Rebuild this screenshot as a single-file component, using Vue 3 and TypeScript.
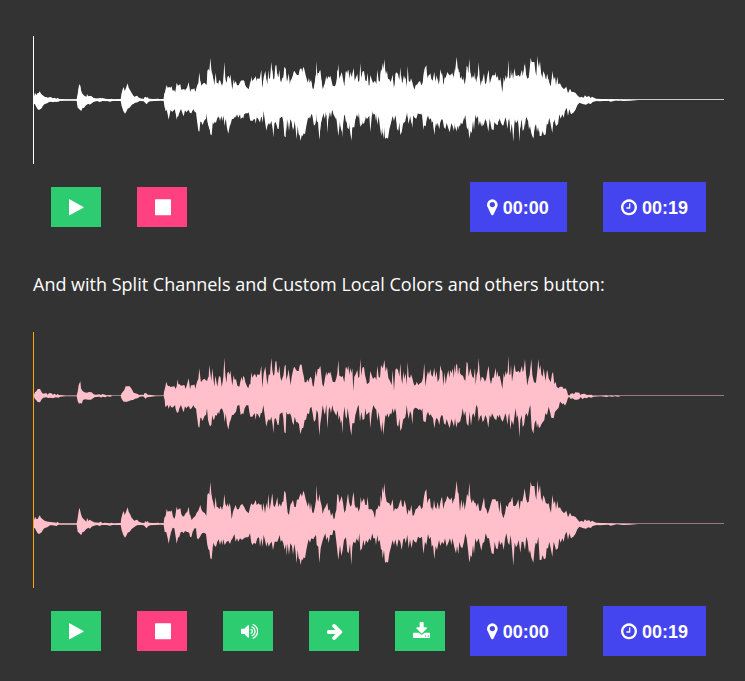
<script setup lang="ts">
interface Segment {
  at: number
  mid: number
  top: string
  bottom: string
}

interface Glyph {
  x: number
  width: number
  d: string
}

// Envelope coordinates use three units per CSS pixel.
const WIDTH = 2073
const HALF = 192
const ICON = 18.67

const left: Segment[] = [
  {
    at: -24,
    mid: 153,
    top: '26,152 30,142 34,139 38,132 45,132 50,142 54,146 64,144 67,149 72,145 78,144 84,149 88,146 94,150 98,147 102,150 115,151 122,152 155,152 158,140 161,120 166,109 168,130 172,137 178,142 186,143 192,141 200,142 206,148 212,149 225,148 227,151 232,147 240,149 245,151 255,150 262,152 287,152 290,145 298,135 302,124 314,124 320,132 326,143 338,147 342,150 352,149 356,150 359,144 364,145 368,149 380,150 392,152 416,152 417,140 420,130 424,110 427,120 430,124 433,122 436,126 448,124 452,132 455,124 458,103 460,118 464,118 468,122 478,120 482,132 487,115 491,100 494,122',
    bottom: '26,154 30,162 34,166 38,171 45,172 50,163 55,158 64,157 70,159 78,158 84,160 92,157 100,158 106,155 120,154 155,154 158,168 162,176 166,174 170,176 174,165 180,163 190,164 198,164 204,160 210,156 225,155 228,158 232,155 242,157 246,154 255,155 262,153 287,153 290,162 296,170 306,170 318,166 326,164 330,161 338,160 344,155 354,154 362,161 366,157 372,156 390,154 416,153 419,165 421,186 424,184 428,180 431,192 435,180 438,185 442,188 447,184 450,180 452,192 456,203 460,202 463,190 468,180 472,192 476,202 480,184 484,190 490,183 493,186',
  },
  {
    at: 471,
    mid: 153,
    top: '0,132 3,121 7,121 10,120 13,118 16,131 19,118 22,108 25,102 28,70 31,98 33,112 36,107 40,103 44,102 48,106 51,109 54,98 56,95 58,60 61,85 64,108 67,70 70,98 73,125 76,92 79,108 82,125 86,98 89,92 92,98 95,126 98,110 100,95 103,38 106,88 109,114 112,84 116,80 119,90 121,76 124,100 127,122 131,91 134,105 138,102 142,122 148,125 151,110 155,95 157,108 160,92 163,97 166,112 172,126 175,130 178,118 181,118 184,82 187,98 190,92 195,86 199,98 202,88 208,90 210,85 214,62 217,130 221,85 226,65 229,92 232,120 236,90 240,88 244,38 247,75 250,92 253,88 256,50 259,48 262,80 265,85 268,62 271,95 274,108 277,100 280,92 284,62 287,60 289,105 293,90 296,73 299,100 302,120 305,95 308,82 311,68 314,66 317,73 321,78 326,78 329,62 332,58 335,60 338,80 341,92 344,112 349,112 352,102 355,112 359,100 362,95 365,102 368,122 371,125 375,95 377,76 380,96 383,72 387,72 391,62 394,90 397,118 401,125 405,100 409,80 411,92 415,82 418,86',
    bottom: '0,193 5,190 10,181 15,190 18,190 21,215 25,245 28,248 31,218 34,218 37,228 40,222 44,212 48,210 51,190 54,225 58,240 61,244 64,240 67,210 70,225 73,222 76,210 80,212 84,200 87,208 90,195 95,190 98,195 101,205 104,232 107,205 111,238 115,254 119,232 122,225 126,210 130,210 134,205 138,200 142,182 148,180 152,210 157,205 160,208 164,190 169,181 175,181 178,200 181,215 187,215 190,210 194,205 197,224 200,205 205,210 209,220 212,205 216,203 220,180 224,210 229,245 233,228 237,222 240,228 244,215 248,240 250,265 253,225 256,218 259,225 263,240 266,240 269,208 273,205 277,202 280,220 283,262 287,265 289,200 292,208 297,208 300,205 304,215 307,232 311,240 314,215 319,232 323,232 327,238 331,268 336,250 340,248 344,225 348,224 352,205 357,208 360,190 364,185 368,205 371,226 374,230 377,222 380,194 384,205 388,272 391,235 394,215 398,180 402,200 405,210 409,178 412,252 416,195 419,185',
  },
  {
    at: 861,
    mid: 153,
    top: '3,68 6,110 9,128 13,118 17,98 20,85 24,98 27,78 31,80 34,92 38,110 45,112 49,100 52,85 55,45 58,92 65,96 68,92 73,112 77,68 79,66 82,75 85,62 88,90 91,68 94,85 97,70 100,138 103,95 107,88 112,75 115,100 118,95 121,42 124,92 127,68 132,66 135,90 138,102 141,118 148,112 151,78 154,88 159,102 165,95 169,105 172,62 176,95 180,98 183,60 188,70 190,62 193,45 197,80 201,65 205,98 210,108 215,120 218,75 222,138 226,75 229,70 234,75 238,95 241,55 244,100 247,118 250,78 253,102 257,85 260,120 263,50 266,95 270,100 273,88 277,100 280,112 283,122 288,118 290,110 295,120 300,115 305,112 309,98 313,55 316,125 320,95 324,78 327,90 331,72 334,90 338,95 343,68 346,98 350,78 353,112 358,100 361,60 364,75 367,80 370,122 374,82 377,118 381,92 385,75 388,98 391,75 395,85 398,70 402,100 403,58 406,85 408,62 411,55 414,90 417,68 419,70',
    bottom: '0,250 4,190 7,182 10,200 13,185 16,195 19,175 23,250 27,185 30,190 33,205 37,180 40,195 45,205 49,212 53,195 56,225 59,210 62,235 65,225 67,265 70,215 73,185 77,215 80,222 83,190 87,220 90,245 94,272 97,235 103,235 106,210 109,200 113,185 116,180 120,230 124,200 128,225 133,222 136,190 139,210 144,205 148,200 151,250 155,205 158,190 160,180 164,188 169,195 172,228 176,200 180,235 184,262 187,228 190,270 193,240 196,210 199,215 202,205 206,218 210,205 214,208 218,190 221,205 225,190 228,200 231,240 235,245 238,220 241,258 245,250 249,225 252,220 255,220 258,205 260,180 263,205 266,222 270,198 274,208 277,238 280,195 285,188 291,190 296,195 300,192 304,198 307,190 310,228 317,232 320,210 324,200 328,212 332,208 336,215 339,220 343,250 347,225 350,218 354,225 358,240 361,218 365,210 368,212 372,235 376,240 380,222 384,235 389,250 394,222 398,232 402,245 405,220 409,248 413,230 417,235 419,228',
  },
  {
    at: 1251,
    mid: 153,
    top: '30,85 34,90 39,92 42,102 46,108 50,50 53,55 56,95 61,70 64,85 67,95 71,100 75,68 77,120 80,90 83,80 86,40 89,85 92,110 95,95 100,98 105,110 109,100 112,80 116,62 119,100 123,118 127,98 131,98 135,80 137,68 140,98 142,78 145,95 149,92 153,110 157,132 161,85 164,98 167,78 170,90 173,80 175,32 178,90 181,88 183,60 186,110 190,85 193,58 197,80 202,80 206,78 210,84 213,72 216,62 218,82 221,75 225,42 228,85 232,122 236,100 239,90 244,42 247,90 251,108 255,115 258,112 262,78 265,42 268,75 271,60 274,88 278,95 281,70 284,90 287,108 290,80 292,75 296,100 302,112 306,88 309,80 313,118 317,110 320,125 325,130 330,125 337,125 341,132 347,130 351,138 354,150 358,152 362,146 368,145 372,148 376,142 388,143 391,150 396,147 404,146 410,150 424,149 428,152 450,152 470,151 475,153 485,151 490,153 500,151 510,152 822,152',
    bottom: '30,232 35,210 38,190 42,212 46,198 50,235 55,244 59,200 63,242 67,210 71,205 74,218 78,185 80,180 83,190 86,230 90,215 94,210 98,232 102,225 106,210 110,220 115,248 119,210 123,218 126,205 131,215 134,222 139,225 142,210 146,218 149,208 153,222 158,230 162,220 166,205 169,215 172,240 176,210 178,205 181,254 185,225 190,240 194,210 197,190 200,220 203,210 206,235 208,278 211,225 215,210 218,246 222,240 226,210 230,205 233,215 238,190 241,180 245,250 250,266 254,235 258,225 261,248 264,235 267,250 271,245 274,238 278,232 283,225 286,205 291,210 296,185 300,200 304,218 311,220 315,200 320,195 326,188 330,170 338,178 341,175 345,182 350,172 354,158 358,156 362,162 368,160 374,164 382,164 388,162 392,156 397,162 404,158 410,160 416,156 424,158 430,155 452,154 465,155 470,156 478,154 485,155 495,154 505,155 512,153 822,153',
  },
]

const right: Segment[] = [
  {
    at: -24,
    mid: 537,
    top: '26,530 30,515 34,522 38,522 44,511 48,518 52,522 60,528 70,530 82,532 95,533 98,530 102,535 155,535 158,520 162,492 164,490 168,508 172,518 178,524 184,530 186,518 190,528 194,524 200,528 207,532 220,533 228,530 232,535 240,533 255,535 260,533 265,535 287,534 289,520 293,505 296,498 299,510 302,503 308,487 311,500 315,507 320,518 328,527 336,524 342,530 350,533 358,534 361,528 364,532 368,528 371,533 385,534 400,533 404,535 410,534 416,535 418,518 422,512 425,492 428,500 433,498 436,500 440,496 444,515 448,522 451,512 455,485 458,495 462,492 466,490 469,508 474,515 478,512 482,505 487,500 491,485 494,510',
    bottom: '26,548 30,550 34,558 38,565 42,567 50,562 53,556 58,550 68,546 75,541 82,541 95,543 100,539 120,539 155,539 158,560 162,563 165,567 169,570 172,562 177,560 183,553 190,548 195,551 200,545 207,542 216,540 224,543 230,540 245,540 255,542 262,540 287,540 290,555 295,570 300,578 304,572 308,563 314,560 320,552 328,546 336,541 346,540 356,541 362,547 365,550 369,544 375,541 390,540 410,539 416,540 419,560 424,562 428,580 431,596 435,575 438,562 443,548 448,550 452,575 455,596 459,578 463,575 467,562 472,560 476,565 480,558 485,560 490,562 493,564',
  },
  {
    at: 471,
    mid: 162,
    top: '0,133 5,150 10,143 16,138 20,128 25,122 31,105 34,118 38,125 45,130 49,138 52,75 55,68 58,75 61,36 64,70 67,88 70,98 73,118 77,80 80,110 84,112 88,118 92,108 96,120 100,105 103,72 106,102 110,110 113,100 116,112 119,98 122,115 125,148 129,125 133,115 137,105 141,118 146,118 152,105 157,102 163,112 168,122 176,130 180,112 184,100 188,105 192,102 197,90 200,105 206,100 210,105 214,102 217,125 221,98 225,130 229,98 232,115 235,72 239,120 243,95 247,70 250,105 254,112 258,100 262,82 265,112 269,100 273,110 277,95 280,95 283,62 287,68 290,100 293,128 297,135 301,105 305,98 309,90 313,110 317,112 321,88 325,90 329,78 332,70 336,80 340,62 343,70 347,88 350,98 353,110 357,95 360,120 363,100 367,128 371,128 375,110 378,90 379,45 382,88 385,95 388,72 391,92 395,108 398,132 402,118 406,112 412,98 415,122 419,118 423,138 427,128 431,148 434,145 436,130 439,120 442,72 445,75 448,98 452,88 455,78 459,98 463,128 467,120 470,98 474,70 477,95 481,110 485,105 488,80 491,66 494,105 498,115 502,110 506,125 510,112 512,80 515,98 519,90 522,85 526,105 530,105 533,80 536,118 545,118 550,125 555,145 558,118 562,118 566,105 570,112 572,75 575,98 577,50 580,70 583,40 586,75 590,95 594,98 598,100 602,108 608,88 611,125 615,115 620,118 625,112 629,98 633,88 636,108 640,112 644,90 648,108 652,135 656,118 660,125 664,105 668,138 672,135 677,118 682,115 686,108 690,105 694,118 698,112 702,80 705,65 709,58 712,100 716,88 720,85 723,118 726,110 729,122 732,90 735,110 739,118 743,95 747,120 752,92 756,80 760,118 764,98 768,92 772,78 776,85 781,90 785,82 788,102 791,90 794,85 797,60 800,32 803,65 806,72 810,125 814,88 818,115 821,92 824,120 828,95 831,72 835,80 838,38 841,82 845,100 849,88 853,98 856,98 860,110 864,98 868,122 873,122 878,100 882,82 885,112 889,118 893,132 898,118 903,100 907,88 916,88 920,95 924,92 928,128 932,92 935,128 940,145 945,130 949,105 953,112 957,98 962,95 967,80 970,108 976,108 981,100 985,88 989,120 992,92 997,95 1001,75 1004,55 1008,85 1012,98 1016,95 1019,70 1022,35 1025,48 1033,48 1036,75 1039,90 1042,30 1046,70 1050,45 1053,80 1057,95 1060,75 1064,85 1067,98 1072,102 1076,100 1079,115 1083,128 1087,75 1091,102 1095,92 1098,118 1102,92 1105,115 1110,112 1115,122 1122,130 1129,122 1134,142 1140,128 1145,138 1150,138 1156,140 1162,148 1168,155 1175,152 1180,156 1185,148 1190,153 1197,150 1202,156 1206,152 1212,155 1218,158 1235,159 1275,160 1335,161 1602,161',
    bottom: '0,200 4,202 8,185 14,175 18,175 21,205 25,208 30,200 36,190 42,188 48,192 52,225 55,238 58,240 61,265 65,268 68,232 71,218 74,228 78,230 82,215 86,208 90,225 94,210 97,225 100,208 104,225 110,215 115,212 120,222 124,210 128,205 133,192 137,215 141,205 145,215 150,205 156,210 162,205 168,202 175,202 180,190 184,218 188,225 192,218 197,222 202,205 207,202 210,230 214,205 218,230 221,195 226,215 229,230 233,215 236,230 241,220 245,215 249,240 254,215 262,215 266,205 269,195 272,215 276,210 280,220 284,240 288,222 290,258 293,220 297,255 301,220 306,228 309,255 313,222 316,240 320,280 323,240 326,265 329,268 332,285 335,268 338,270 341,262 345,265 349,240 352,225 356,208 360,218 364,205 370,208 373,202 378,195 380,225 385,230 388,280 392,235 395,222 400,205 406,190 409,210 413,200 416,220 420,195 427,195 430,180 435,182 439,215 445,270 450,225 454,258 458,240 462,210 468,202 472,245 476,250 480,222 484,285 487,230 490,215 496,220 500,205 505,215 508,190 511,242 516,235 520,210 524,228 528,210 533,218 538,205 542,212 547,190 550,205 555,205 558,225 562,195 565,215 569,210 573,238 576,240 578,265 582,240 585,278 590,275 594,278 598,250 602,235 608,210 612,225 616,208 621,232 626,208 631,215 635,240 640,208 644,205 647,220 652,195 656,235 660,208 665,235 669,208 674,215 679,218 684,200 690,205 696,200 700,252 705,215 709,225 714,192 718,208 722,200 725,230 729,225 733,268 737,228 741,240 747,210 751,228 756,215 761,222 765,205 770,230 775,218 780,205 784,225 787,205 791,222 795,240 798,250 801,228 805,252 808,215 812,230 817,235 822,215 826,190 830,205 834,238 838,278 842,255 845,262 849,225 852,252 856,205 860,218 866,205 869,220 874,242 878,220 883,215 887,190 892,205 897,205 901,228 905,250 911,252 914,215 918,235 923,238 927,210 931,225 936,215 941,240 945,208 949,190 954,218 958,225 962,195 966,235 970,288 974,218 978,232 982,225 986,210 991,248 995,215 1000,215 1005,240 1009,200 1013,215 1017,250 1020,240 1024,262 1030,278 1034,235 1037,218 1041,222 1045,200 1049,270 1054,270 1058,255 1062,268 1067,265 1070,235 1074,235 1078,215 1082,235 1087,260 1091,215 1094,225 1098,240 1104,235 1108,205 1112,218 1117,205 1121,215 1125,195 1130,185 1134,210 1138,190 1143,205 1150,200 1156,192 1162,178 1168,170 1178,174 1188,176 1195,172 1202,174 1208,168 1220,165 1228,166 1255,164 1262,167 1280,163 1300,165 1320,164 1345,162 1602,162',
  },
]

// Neighbouring segments overlap slightly; points that would step backwards are skipped.
function trace(segments: Segment[], side: 'top' | 'bottom'): string[] {
  const points: string[] = []
  let last = -1
  for (const segment of segments) {
    for (const pair of segment[side].split(' ')) {
      const [px, py] = pair.split(',').map(Number)
      const x = px + segment.at
      if (x <= last) continue
      last = x
      const offset = py - segment.mid
      const clamped = side === 'top' ? Math.min(offset, -1.5) : Math.max(offset, 0)
      points.push(`${x} ${HALF + clamped}`)
    }
  }
  return points
}

function envelope(segments: Segment[]): string {
  return `M${[...trace(segments, 'top'), ...trace(segments, 'bottom').reverse()].join('L')}Z`
}

const leftPath = envelope(left)
const rightPath = envelope(right)

const glyphs: Record<string, Glyph> = {
  play: { x: 192, width: 1408, d: 'M1576 927l-1328 738q-23 13-39.5 3t-16.5-36v-1472q0-26 16.5-36t39.5 3l1328 738q23 13 23 31t-23 31z' },
  stop: { x: 128, width: 1536, d: 'M1664 192v1408q0 26-19 45t-45 19h-1408q-26 0-45-19t-19-45v-1408q0-26 19-45t45-19h1408q26 0 45 19t19 45z' },
  volume: { x: 64, width: 1664, d: 'M832 352v1088q0 26-19 45t-45 19-45-19l-333-333h-262q-26 0-45-19t-19-45v-384q0-26 19-45t45-19h262l333-333q19-19 45-19t45 19 19 45zm384 544q0 76-42.5 141.5t-112.5 93.5q-10 5-25 5-26 0-45-18.5t-19-45.5q0-21 12-35.5t29-25 34-23 29-36 12-56.5-12-56.5-29-36-34-23-29-25-12-35.5q0-27 19-45.5t45-18.5q15 0 25 5 70 27 112.5 93t42.5 142zm256 0q0 153-85 282.5t-225 188.5q-13 5-25 5-27 0-46-19t-19-45q0-39 39-59 56-29 76-44 74-54 115.5-135.5t41.5-173.5-41.5-173.5-115.5-135.5q-20-15-76-44-39-20-39-59 0-26 19-45t45-19q13 0 26 5 140 59 225 188.5t85 282.5zm256 0q0 230-127 422.5t-338 283.5q-13 5-26 5-26 0-45-19t-19-45q0-36 39-59 7-4 22.5-10.5t22.5-10.5q46-25 82-51 123-91 192-227t69-289-69-289-192-227q-36-26-82-51-7-4-22.5-10.5t-22.5-10.5q-39-23-39-59 0-26 19-45t45-19q13 0 26 5 211 91 338 283.5t127 422.5z' },
  arrow: { x: 128, width: 1536, d: 'M1600 960q0 54-37 91l-651 651q-39 37-91 37-51 0-90-37l-75-75q-38-38-38-91t38-91l293-293h-704q-52 0-84.5-37.5t-32.5-90.5v-128q0-53 32.5-90.5t84.5-37.5h704l-293-294q-38-36-38-90t38-90l75-75q38-38 90-38 53 0 91 38l651 651q37 35 37 90z' },
  download: { x: 64, width: 1664, d: 'M1344 1344q0-26-19-45t-45-19-45 19-19 45 19 45 45 19 45-19 19-45zm256 0q0-26-19-45t-45-19-45 19-19 45 19 45 45 19 45-19 19-45zm128-224v320q0 40-28 68t-68 28h-1472q-40 0-68-28t-28-68v-320q0-40 28-68t68-28h465l135 136q58 56 136 56t136-56l136-136h464q40 0 68 28t28 68zm-325-569q17 41-14 70l-448 448q-18 19-45 19t-45-19l-448-448q-31-29-14-70 17-39 59-39h256v-448q0-26 19-45t45-19h256q26 0 45 19t19 45v448h256q42 0 59 39z' },
  marker: { x: 384, width: 1024, d: 'M1152 640q0-106-75-181t-181-75-181 75-75 181 75 181 181 75 181-75 75-181zm256 0q0 109-33 179l-364 774q-16 33-47.5 52t-67.5 19-67.5-19-46.5-52l-365-774q-33-70-33-179 0-212 150-362t362-150 362 150 150 362z' },
  clock: { x: 128, width: 1536, d: 'M1024 544v448q0 14-9 23t-23 9h-320q-14 0-23-9t-9-23v-64q0-14 9-23t23-9h224v-352q0-14 9-23t23-9h64q14 0 23 9t9 23zm416 352q0-148-73-273t-198-198-273-73-273 73-198 198-73 273 73 273 198 198 273 73 273-73 198-198 73-273zm224 0q0 209-103 385.5t-279.5 279.5-385.5 103-385.5-103-279.5-279.5-103-385.5 103-385.5 279.5-279.5 385.5-103 385.5 103 279.5 279.5 103 385.5z' },
}

const players = [
  { id: 'mono', split: false, buttons: ['play', 'stop'] },
  { id: 'split', split: true, buttons: ['play', 'stop', 'volume', 'arrow', 'download'] },
]

const times = [
  { glyph: 'marker', text: '00:00' },
  { glyph: 'clock', text: '00:19' },
]

const box = (name: string): string => `${glyphs[name].x} 0 ${glyphs[name].width} 1792`
const iconWidth = (name: string): number => (glyphs[name].width / 1792) * ICON
</script>

<template>
  <main class="page">
    <section v-for="player in players" :key="player.id" class="player">
      <p v-if="player.split" class="caption">And with Split Channels and Custom Local Colors and others button:</p>
      <div class="wave" :class="player.id">
        <template v-if="player.split">
          <svg class="channel" :viewBox="`0 0 ${WIDTH} 384`"><path :d="leftPath" /></svg>
          <svg class="channel" :viewBox="`0 0 ${WIDTH} 384`"><path :d="rightPath" /></svg>
        </template>
        <svg v-else class="channel" :viewBox="`0 0 ${WIDTH} 384`">
          <path :d="leftPath" />
          <path :d="rightPath" />
        </svg>
        <span class="cursor"></span>
      </div>
      <div class="controls">
        <div class="buttons">
          <button v-for="name in player.buttons" :key="name" type="button" :class="name">
            <svg :width="iconWidth(name)" :height="ICON" :viewBox="box(name)"><path :d="glyphs[name].d" /></svg>
          </button>
        </div>
        <div class="times">
          <div v-for="time in times" :key="time.glyph" class="time" :class="time.glyph">
            <svg :width="iconWidth(time.glyph)" :height="ICON" :viewBox="box(time.glyph)"><path :d="glyphs[time.glyph].d" /></svg>
            <span>{{ time.text }}</span>
          </div>
        </div>
      </div>
    </section>
  </main>
</template>

<style>
body {
  margin: 0;
  background: #333;
}
</style>

<style scoped>
.page {
  box-sizing: border-box;
  width: 745px;
  height: 681px;
  padding: 36px 21px 0 33px;
  overflow: hidden;
  background: #333;
  color: #fff;
}

.caption {
  margin: 36px 0;
  height: 28px;
  font: 18px/32px "Open Sans", "Noto Sans", sans-serif;
  white-space: nowrap;
}

.wave {
  position: relative;
  width: 691px;
  fill: #fff;
}

.wave.split {
  fill: pink;
}

.channel {
  display: block;
  width: 691px;
  height: 128px;
}

.cursor {
  position: absolute;
  inset: 0 auto 0 0;
  width: 1px;
  background: #fff;
}

.split .cursor {
  background: orange;
}

.controls {
  display: flex;
  justify-content: space-between;
  align-items: center;
  height: 50px;
  padding: 18px 18px 0;
}

.buttons,
.times {
  display: flex;
  gap: 36px;
}

button {
  display: flex;
  width: 50px;
  height: 40px;
  padding: 11px 0 0 18px;
  border: 0;
  background: #2ecc71;
  fill: #fff;
}

button.stop {
  background: #ff4081;
}

svg {
  flex: none;
}

.time {
  display: flex;
  box-sizing: border-box;
  width: 97px;
  height: 50px;
  padding: 16px 0 0 17px;
  gap: 5px;
  background: #4545f0;
  fill: #fff;
  font: bold 18px/20px "Liberation Sans", Arial, sans-serif;
}

.time.clock {
  width: 103px;
  padding-left: 18px;
}
</style>
